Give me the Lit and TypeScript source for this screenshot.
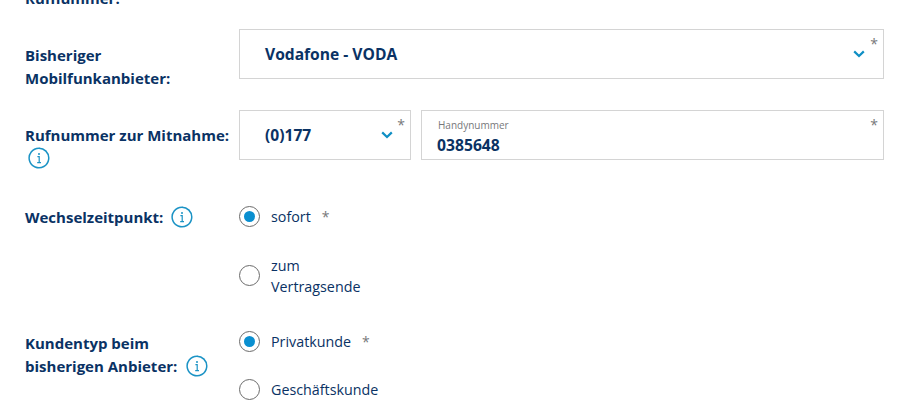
import { LitElement, html, css, svg } from 'lit';
import { customElement } from 'lit/decorators.js';

const infoIcon = svg`<svg class="info" width="22" height="22" viewBox="0 0 22 22" fill="none">
  <path d="M11 1.2a9.8 9.8 0 1 0 6.9 2.9" stroke="#1b93c5" stroke-width="1.5" stroke-linecap="round"/>
  <path d="M11 1.2a9.8 9.8 0 0 1 6.9 2.9" stroke="#1b93c5" stroke-width="1.5"/>
  <circle cx="11" cy="6.9" r="1" fill="#1b93c5"/>
  <path d="M9.4 9.6H11.2V15.4M9.2 15.6H13" stroke="#1b93c5" stroke-width="1.2"/>
</svg>`;

const chevron = svg`<svg class="chev" width="12" height="8" viewBox="0 0 12 8" fill="none">
  <path d="M1.2 1.4L6 6L10.8 1.4" stroke="#0f8fc4" stroke-width="2.2"/>
</svg>`;

@customElement('app-root')
export class AppRoot extends LitElement {
  private _radio(label: unknown, checked: boolean, required = false) {
    return html`
      <div class="radio">
        <span class="dot ${checked ? 'on' : ''}"></span>
        <span class="radio-label">${label}</span>
        ${required ? html`<span class="star inline">*</span>` : ''}
      </div>
    `;
  }

  render() {
    return html`
      <div class="page">
        <div class="cut-label label">Rufnummer:</div>

        <div class="row first">
          <div class="label">Bisheriger<br />Mobilfunkanbieter:</div>
          <div class="select wide">
            <span class="value">Vodafone - VODA</span>
            ${chevron}
            <span class="star">*</span>
          </div>
        </div>

        <div class="row second">
          <div class="label">Rufnummer zur Mitnahme:<br />${infoIcon}</div>
          <div class="fields">
            <div class="select prefix">
              <span class="value">(0)177</span>
              ${chevron}
              <span class="star">*</span>
            </div>
            <div class="input">
              <span class="hint">Handynummer</span>
              <span class="number">0385648</span>
              <span class="star">*</span>
            </div>
          </div>
        </div>

        <div class="row third">
          <div class="label">Wechselzeitpunkt: ${infoIcon}</div>
          <div class="radios switch">
            ${this._radio('sofort', true, true)}
            ${this._radio(html`zum<br />Vertragsende`, false)}
          </div>
        </div>

        <div class="row fourth">
          <div class="label">Kundentyp beim<br />bisherigen Anbieter: ${infoIcon}</div>
          <div class="radios type">
            ${this._radio('Privatkunde', true, true)}
            ${this._radio('Geschäftskunde', false)}
          </div>
        </div>
      </div>
    `;
  }

  static styles = css`
    :host {
      display: block;
      height: 410px;
      overflow: hidden;
      background: #fff;
      font-family: 'Open Sans', 'Noto Sans', sans-serif;
      color: #0a3264;
    }
    .page {
      padding: 0 38px 0 25px;
      margin-top: -13px;
    }
    .label {
      font-size: 15px;
      font-weight: 700;
      line-height: 23px;
      color: #0a3264;
    }
    .info {
      vertical-align: middle;
      margin: -4px 0 0 4px;
    }
    .cut-label {
      height: 42px;
      line-height: 22px;
    }
    .row {
      display: grid;
      grid-template-columns: 214px 1fr;
    }
    .row.first .label {
      padding-top: 15px;
    }
    .row.second {
      margin-top: 20px;
    }
    .row.second .label {
      padding-top: 15px;
      white-space: nowrap;
      line-height: 21px;
    }
    .row.second .info {
      margin: 0 0 0 3px;
    }
    .row.third {
      margin-top: 37px;
    }
    .row.fourth {
      margin-top: 34px;
    }
    .row.fourth .label {
      padding-top: 1px;
    }
    .row.fourth .info {
      margin-left: 5px;
    }
    .select,
    .input {
      position: relative;
      box-sizing: border-box;
      height: 50px;
      border: 1px solid #d4d4d4;
      background: #fff;
    }
    .select {
      display: flex;
      align-items: center;
      padding-left: 25px;
    }
    .value {
      font-size: 15.6px;
      font-weight: 700;
      color: #0a3264;
    }
    .chev {
      position: absolute;
      right: 18px;
      top: 20px;
    }
    .prefix .chev {
      right: 17px;
    }
    .star {
      position: absolute;
      top: 5px;
      right: 5px;
      font-size: 14px;
      color: #77787b;
      line-height: 18px;
    }
    .star.inline {
      position: static;
      margin-left: 11px;
    }
    .fields {
      display: flex;
      gap: 10px;
    }
    .prefix {
      flex: 0 0 172px;
    }
    .input {
      flex: 1;
      padding: 7px 16px;
      display: flex;
      flex-direction: column;
    }
    .hint {
      font-size: 10px;
      line-height: 14px;
      color: #77787b;
    }
    .number {
      font-size: 15.7px;
      font-weight: 700;
      line-height: 20px;
      color: #0a3264;
      margin: 3px 0 0 -1px;
    }
    .radios {
      display: flex;
      flex-direction: column;
    }
    .radios.switch {
      gap: 27px;
    }
    .radios.type {
      gap: 26px;
    }
    .radio {
      display: flex;
      align-items: center;
      min-height: 22px;
      font-size: 14.3px;
      line-height: 21px;
      color: #0a3264;
    }
    .dot {
      position: relative;
      flex: none;
      box-sizing: border-box;
      width: 21px;
      height: 21px;
      border: 1px solid #6b6b6b;
      border-radius: 50%;
      margin-right: 11px;
    }
    .dot.on::after {
      content: '';
      position: absolute;
      left: 4px;
      top: 4px;
      width: 11px;
      height: 11px;
      border-radius: 50%;
      background: #0a8fd0;
    }
  `;
}
